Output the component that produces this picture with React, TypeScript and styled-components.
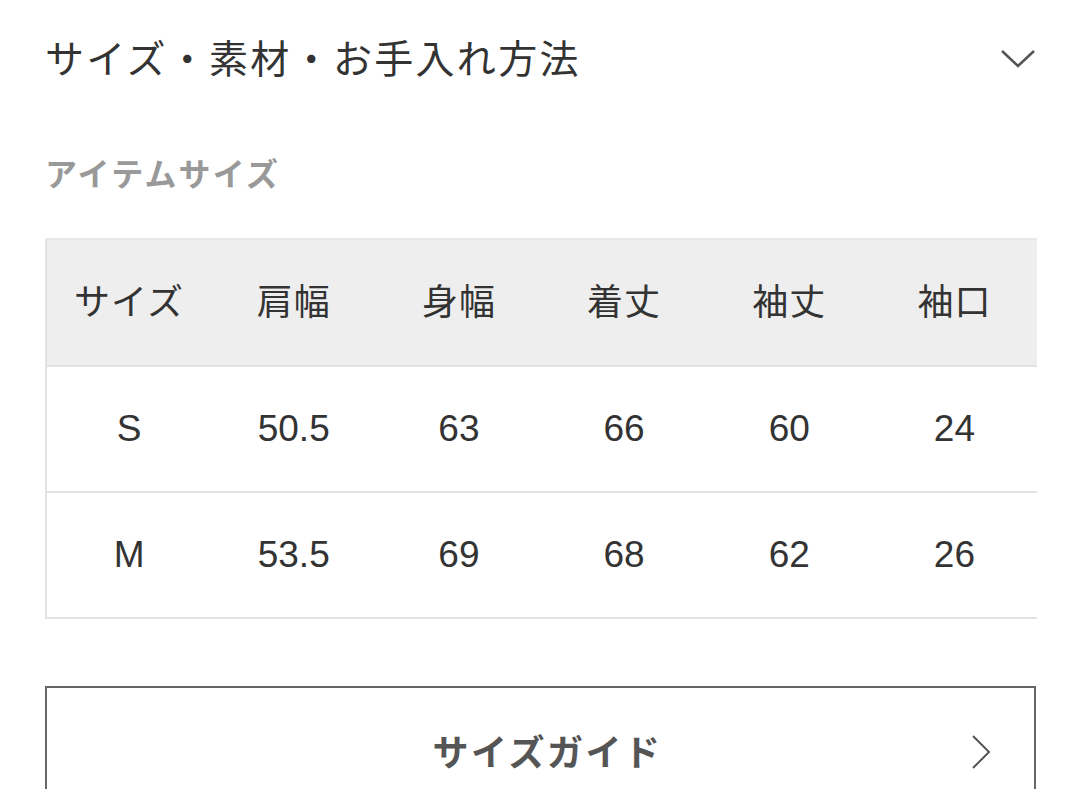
import styled, { createGlobalStyle } from "styled-components";

const GlobalStyle = createGlobalStyle`
  body {
    margin: 0;
    background: #fff;
    font-family: "Liberation Sans", "Noto Sans CJK JP", sans-serif;
    color: #333;
  }
`;

const headers = ["サイズ", "肩幅", "身幅", "着丈", "袖丈", "袖口"];
const rows = [
  ["S", "50.5", "63", "66", "60", "24"],
  ["M", "53.5", "69", "68", "62", "26"],
];

const App = () => {
  return (
    <>
      <GlobalStyle />
      <Page>
        <SectionHeader>
          <SectionTitle>サイズ・素材・お手入れ方法</SectionTitle>
          <ToggleIcon width="36" height="22" viewBox="0 0 36 22">
            <polyline points="2,3 18,18 34,3" fill="none" stroke="#555" strokeWidth="2.6" />
          </ToggleIcon>
        </SectionHeader>
        <SubTitle>アイテムサイズ</SubTitle>
        <SizeTable>
          <thead>
            <tr>
              {headers.map((h) => (
                <HeadCell key={h}>{h}</HeadCell>
              ))}
            </tr>
          </thead>
          <tbody>
            {rows.map((row) => (
              <tr key={row[0]}>
                {row.map((v, i) => (
                  <Cell key={i}>{v}</Cell>
                ))}
              </tr>
            ))}
          </tbody>
        </SizeTable>
        <GuideButton>
          <GuideText>サイズガイド</GuideText>
          <Arrow width="22" height="36" viewBox="0 0 22 36">
            <polyline points="3,2 19,18 3,34" fill="none" stroke="#555" strokeWidth="2" />
          </Arrow>
        </GuideButton>
      </Page>
    </>
  );
};
export default App;

const Page = styled.div`
  padding: 0 44px 0 45px;
`;
const SectionHeader = styled.div`
  height: 120px;
  display: flex;
  align-items: center;
  justify-content: space-between;
  padding-bottom: 8px;
  box-sizing: border-box;
`;
const SectionTitle = styled.h2`
  margin: 0;
  font-size: 39px;
  font-weight: 400;
  color: #333;
  letter-spacing: 2.3px;
`;
const ToggleIcon = styled.svg`
  margin-top: 6px;
`;
const SubTitle = styled.div`
  margin-top: 36px;
  line-height: 38px;
  font-size: 32px;
  font-weight: 700;
  color: #999;
  letter-spacing: 2.2px;
`;
const SizeTable = styled.table`
  margin-top: 44px;
  width: 992px;
  border-collapse: collapse;
  table-layout: fixed;
  border-left: 2px solid #e2e2e2;
  border-top: 2px solid #e8e8e8;
`;
const HeadCell = styled.th`
  height: 117px;
  background: #eeeeee;
  font-size: 36px;
  font-weight: 400;
  color: #333;
  text-align: center;
  border-bottom: 2px solid #e2e2e2;
  padding: 0 0 8px;
  letter-spacing: 1px;
`;
const Cell = styled.td`
  height: 124px;
  font-size: 37px;
  color: #333;
  text-align: center;
  border-bottom: 2px solid #e2e2e2;
  padding: 0;
`;
const GuideButton = styled.div`
  margin-top: 67px;
  height: 130px;
  border: 2px solid #666;
  position: relative;
  display: flex;
  align-items: center;
  justify-content: center;
  padding: 0 0 2px 14px;
  box-sizing: border-box;
`;
const GuideText = styled.span`
  font-size: 36px;
  font-weight: 700;
  color: #555;
  letter-spacing: 2.5px;
`;
const Arrow = styled.svg`
  position: absolute;
  right: 42px;
  top: 46px;
`;
